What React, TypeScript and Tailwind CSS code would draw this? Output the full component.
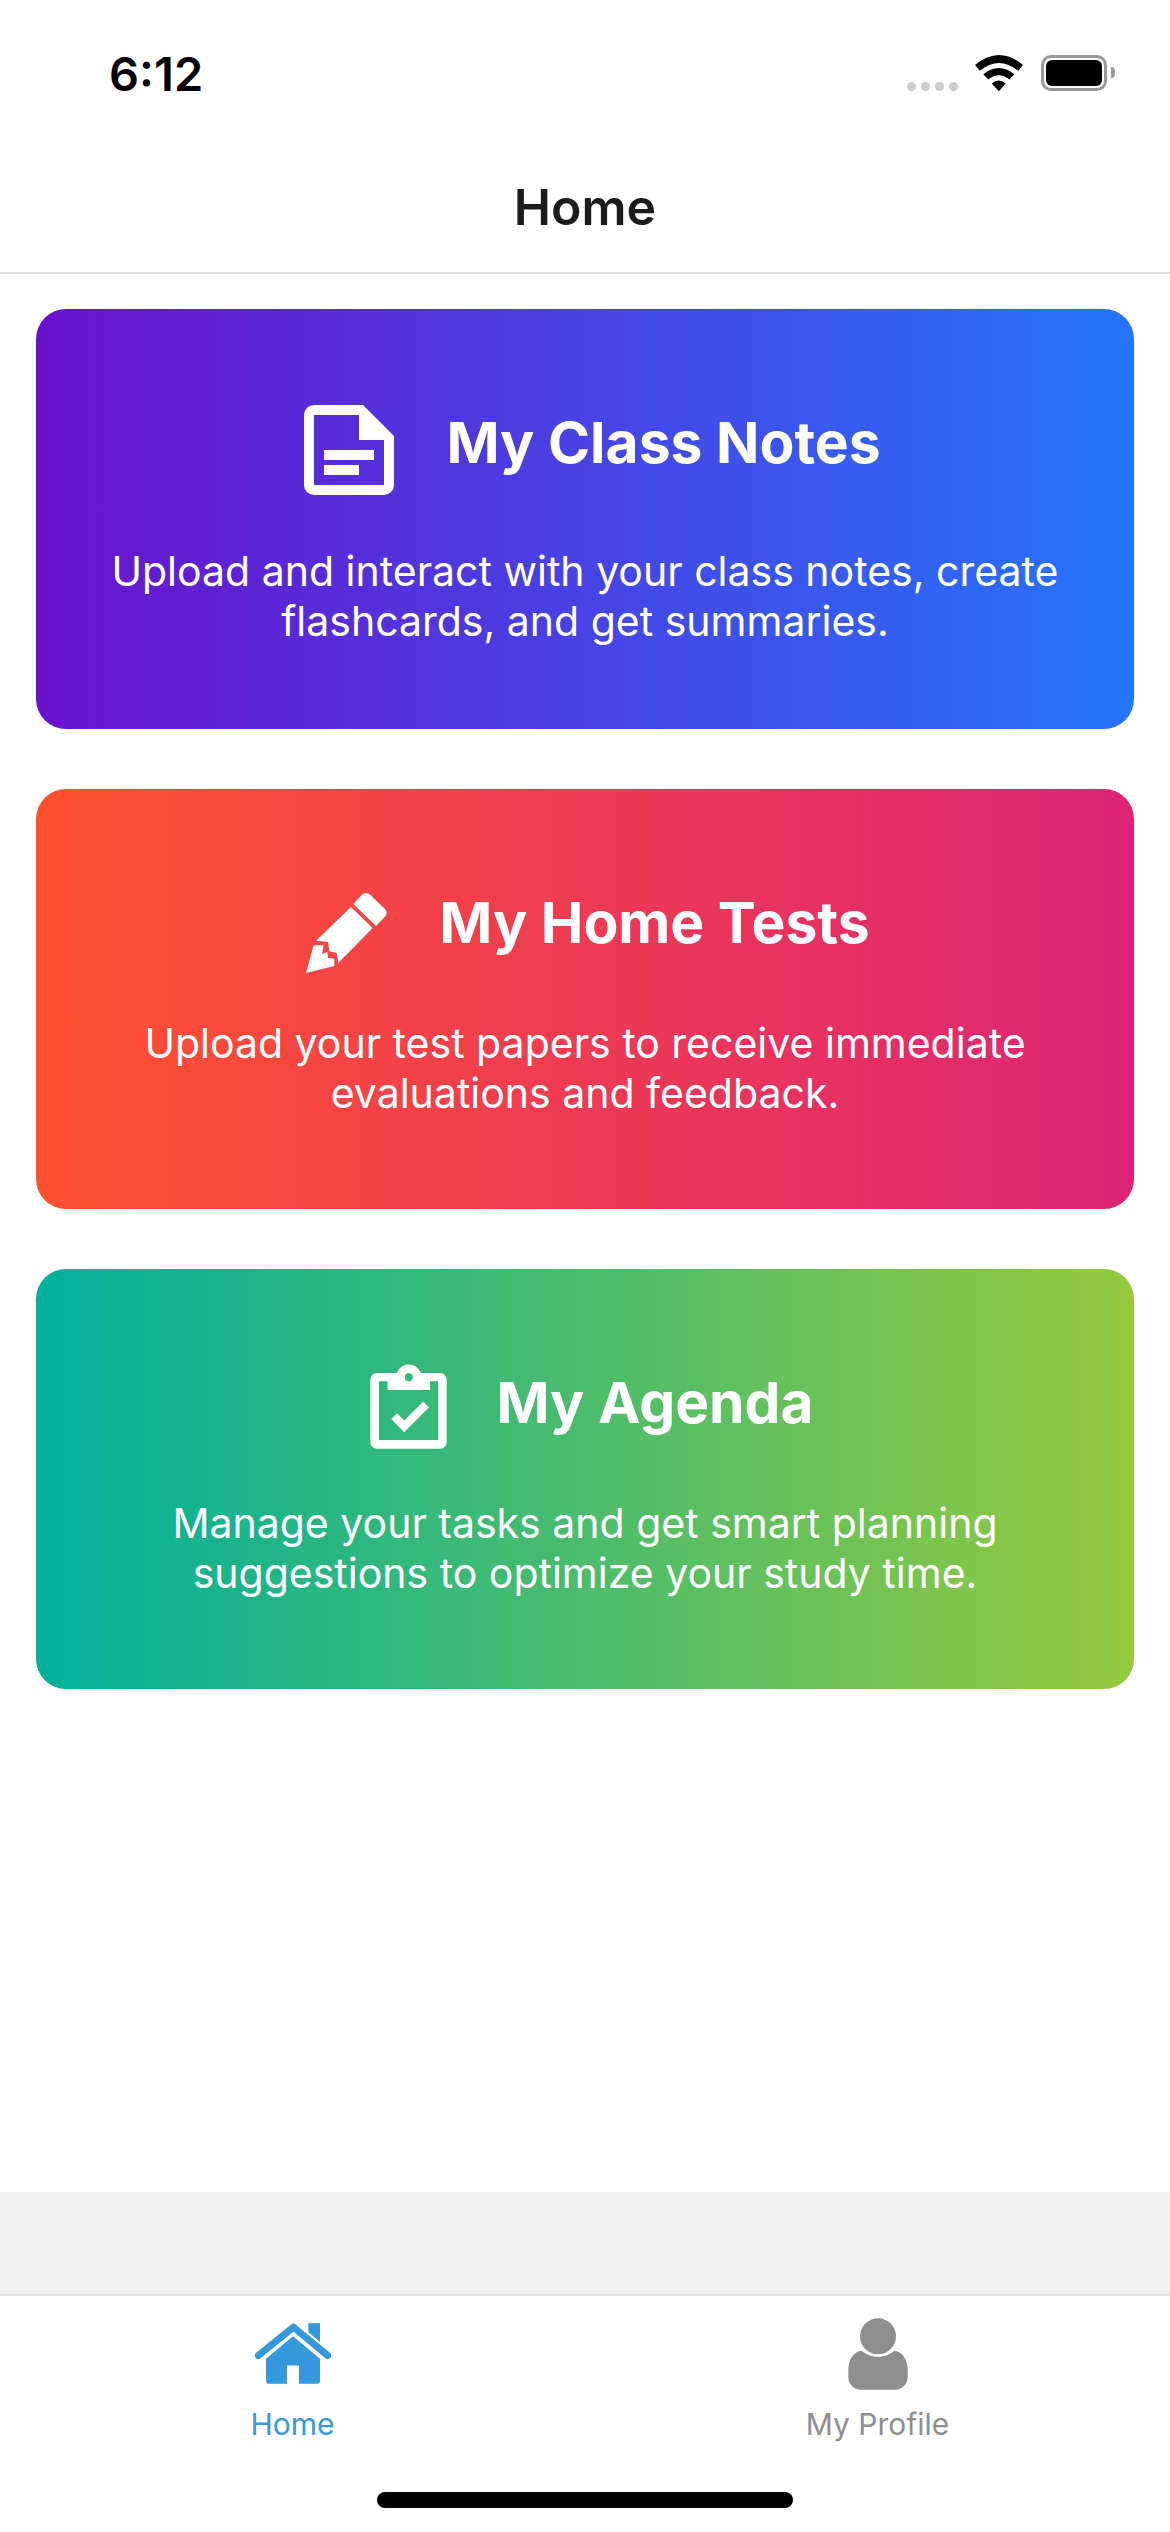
import React from 'react'

const cards = [
  {
    title: 'My Class Notes',
    lines: ['Upload and interact with your class notes, create', 'flashcards, and get summaries.'],
    gradient: 'from-[#6a11cb] to-[#2575fc]',
    row: 'h-[102px] gap-[52px] pl-[15px]',
    icon: <NoteIcon />,
  },
  {
    title: 'My Home Tests',
    lines: ['Upload your test papers to receive immediate', 'evaluations and feedback.'],
    gradient: 'from-[#ff512f] to-[#dd2476]',
    row: 'h-[86px] gap-[52px] pl-[6px]',
    icon: <PencilIcon />,
  },
  {
    title: 'My Agenda',
    lines: ['Manage your tasks and get smart planning', 'suggestions to optimize your study time.'],
    gradient: 'from-[#00b09b] to-[#96c93d]',
    row: 'h-[86px] gap-[49px] pl-[14px]',
    icon: <ClipboardIcon />,
  },
]

function NoteIcon() {
  return (
    <svg viewBox="0 0 90 90" className="w-[90px] h-[90px] mt-[14px] shrink-0" fill="#fff">
      <path
        fillRule="evenodd"
        d="M10 0H59L90 31V80a10 10 0 0 1-10 10H10A10 10 0 0 1 0 80V10A10 10 0 0 1 10 0ZM10 10V80H80V35H55V10Z"
      />
      <rect x="20" y="45" width="50" height="10" />
      <rect x="20" y="60" width="35" height="10" />
    </svg>
  )
}

function PencilIcon() {
  return (
    <svg viewBox="80 62 243 243" className="w-[81px] h-[81px] mt-[18px] shrink-0" fill="#fff">
      <path d="M80 305L103 222L133 222L128 249L144 241L146 259L165 262L165 284Z" />
      <path d="M110 208L215 107L280 170L177 275L172 245L150 240L146 212Z" />
      <path d="M222 98L246 72Q260 58 274 72L316 112Q328 124 316 137L290 164Z" />
    </svg>
  )
}

function ClipboardIcon() {
  return (
    <svg viewBox="58 70 230 256" className="w-[77px] h-[85px] mt-[6px] shrink-0" fill="#fff">
      <path
        fillRule="evenodd"
        d="M78 97H138A38 38 0 0 1 210 97H268A20 20 0 0 1 288 117V305A20 20 0 0 1 268 325H78A20 20 0 0 1 58 305V117A20 20 0 0 1 78 97ZM84 122V299H262V122H238V148H110V122ZM174 98A12 12 0 1 0 174 122A12 12 0 1 0 174 98Z"
      />
      <path d="M130 227L160 258L226 192" fill="none" stroke="#fff" strokeWidth="25" />
    </svg>
  )
}

function WifiIcon() {
  return (
    <svg viewBox="255 45 143 110" className="w-[48px] h-[37px]" fill="#000">
      <path d="M255 75Q326 15 398 75L384 92Q326 45 269 92Z" />
      <path d="M280 102Q326 65 372 102L358 118Q326 92 294 118Z" />
      <path d="M305 130Q326 112 347 130L326 153Z" />
    </svg>
  )
}

function HomeIcon() {
  return (
    <svg viewBox="105 133 228 182" className="w-[76px] h-[61px]" fill="#3498db">
      <rect x="265" y="133" width="35" height="60" />
      <path d="M115 230L220 145L323 230" fill="none" stroke="#fff" strokeWidth="34" />
      <path d="M115 230L220 145L323 230" fill="none" stroke="#3498db" strokeWidth="21" strokeLinecap="round" strokeLinejoin="round" />
      <path d="M138 240L219 172L300 240V305A10 10 0 0 1 290 315H237V260H201V315H148A10 10 0 0 1 138 305Z" />
    </svg>
  )
}

function ProfileIcon() {
  return (
    <svg viewBox="205 117 178 216" className="w-[60px] h-[72px]" fill="#8e8e8e">
      <circle cx="294" cy="172" r="54" />
      <path d="M205 272C205 240 222 217 245 215C258 226 275 233 294 233C313 233 330 226 343 215C366 217 383 240 383 272V295A37 37 0 0 1 346 332H242A37 37 0 0 1 205 295Z" />
    </svg>
  )
}

export default function App() {
  return (
    <div className="w-[1170px] h-[2532px] flex flex-col bg-white overflow-hidden font-['Inter',sans-serif]">
      <div className="h-[132px] shrink-0 flex justify-between pl-[109px] pr-[55px] pt-[46px]">
        <span className="text-[47px] leading-[56px] font-semibold text-black">6:12</span>
        <div className="flex items-start h-[46px] pt-[9px]">
          <div className="flex gap-[5px] mt-[27px] mr-[17px]">
            <span className="w-[9px] h-[9px] rounded-full bg-[#cccccc]" />
            <span className="w-[9px] h-[9px] rounded-full bg-[#cccccc]" />
            <span className="w-[9px] h-[9px] rounded-full bg-[#cccccc]" />
            <span className="w-[9px] h-[9px] rounded-full bg-[#cccccc]" />
          </div>
          <WifiIcon />
          <div className="ml-[18px] w-[66px] h-[36px] border-[3px] border-[#999999] rounded-[10px] p-[2px]">
            <div className="w-full h-full bg-black rounded-[6px]" />
          </div>
          <div className="ml-[4px] mt-[12px] w-[4px] h-[11px] bg-[#999999] rounded-r-full" />
        </div>
      </div>

      <div className="h-[142px] shrink-0 flex items-center justify-center border-b-2 border-[#dfdfdf] pt-[9px]">
        <h1 className="text-[50px] leading-[60px] font-semibold text-[#1c1c1e]">Home</h1>
      </div>

      <div className="flex-1 flex flex-col gap-[60px] px-[36px] pt-[35px]">
        {cards.map((card) => (
          <div
            key={card.title}
            className={`h-[420px] rounded-[30px] bg-linear-to-r/srgb ${card.gradient} flex flex-col items-center justify-center text-white`}
          >
            <div className={`flex items-center mb-[52px] ${card.row}`}>
              {card.icon}
              <span className="text-[57px] leading-[68px] font-bold">{card.title}</span>
            </div>
            <p className="text-[41px] leading-[50px] text-center">
              {card.lines[0]}
              <br />
              {card.lines[1]}
            </p>
          </div>
        ))}
      </div>

      <div className="h-[102px] shrink-0 bg-[#f2f2f2]" />

      <div className="h-[238px] shrink-0 flex flex-col border-t-2 border-[#dfdfdf]">
        <div className="flex h-[196px]">
          <div className="w-1/2 flex flex-col items-center pt-[27px]">
            <HomeIcon />
            <span className="mt-[22px] text-[30px] leading-[36px] text-[#3498db]">Home</span>
          </div>
          <div className="w-1/2 flex flex-col items-center pt-[22px]">
            <ProfileIcon />
            <span className="mt-[16px] text-[30px] leading-[36px] text-[#8e8e8e]">My Profile</span>
          </div>
        </div>
        <div className="flex justify-center">
          <div className="w-[416px] h-[16px] rounded-full bg-black" />
        </div>
      </div>
    </div>
  )
}
